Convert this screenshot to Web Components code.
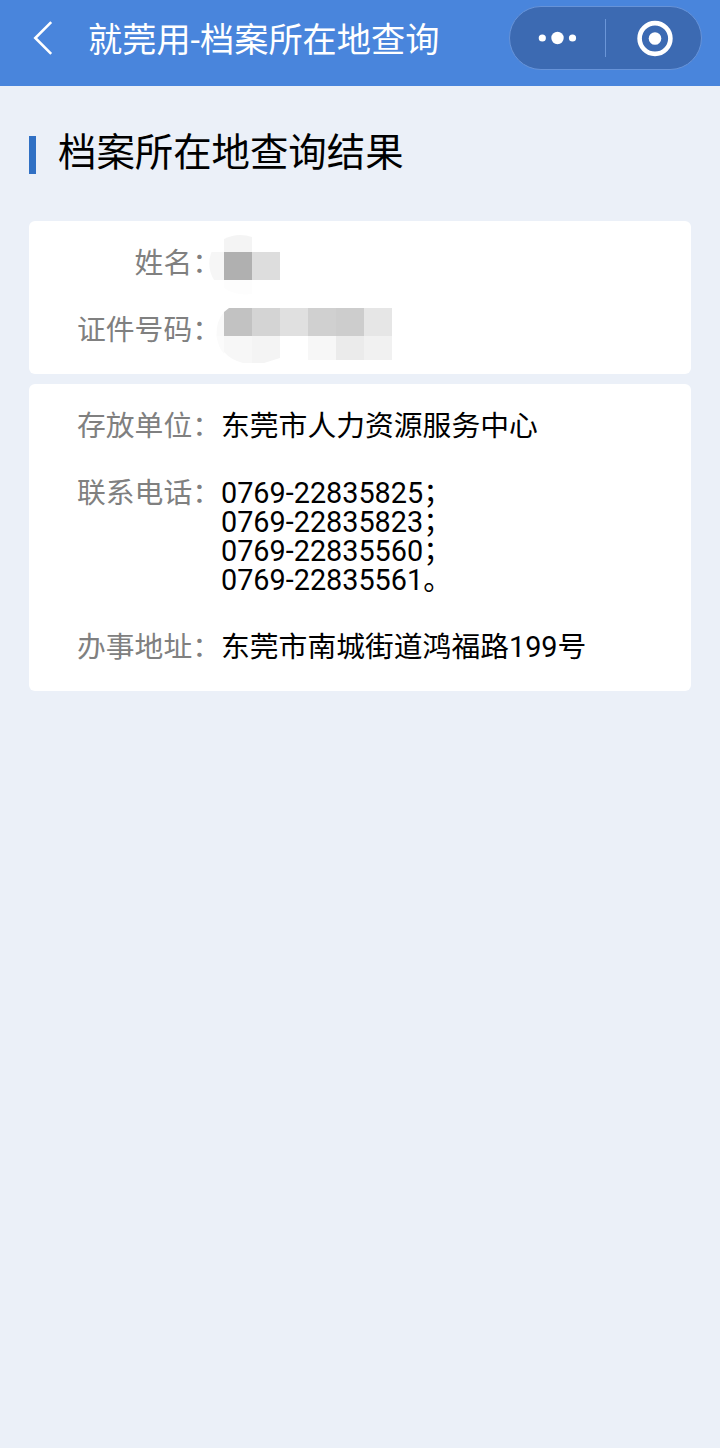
<!DOCTYPE html>
<html lang="zh-CN">
<head>
<meta charset="utf-8">
<meta name="viewport" content="width=device-width, initial-scale=1">
<title>就莞用-档案所在地查询</title>
<style>
    body {
        margin: 0;
        min-height: 100vh;
        background: #ebf0f8;
        color: #000;
        font-family: Roboto, "Noto Sans CJK SC", sans-serif;
        font-size: 28.8px;
        line-height: 29px;
    }
    main {
        display: flex;
        flex-direction: column;
        gap: 10px;
        padding: 0 29px;
    }
</style>
</head>
<body>
<nav-header>就莞用-档案所在地查询</nav-header>
<main>
    <section-title>档案所在地查询结果</section-title>
    <info-card>
        <info-row label="姓名："><masked-value kind="name"></masked-value></info-row>
        <info-row label="证件号码："><masked-value kind="id"></masked-value></info-row>
    </info-card>
    <info-card>
        <info-row label="存放单位：">东莞市人力资源服务中心</info-row>
        <info-row label="联系电话：">0769-22835825；<br>0769-22835823；<br>0769-22835560；<br>0769-22835561。</info-row>
        <info-row label="办事地址：">东莞市南城街道鸿福路199号</info-row>
    </info-card>
</main>

<script>
class NavHeader extends HTMLElement {
    constructor() {
        super();
        this.attachShadow({ mode: 'open' });
        this.shadowRoot.innerHTML = `
            <style>
                :host {
                    display: flex;
                    align-items: center;
                    box-sizing: border-box;
                    height: 86px;
                    padding: 0 18px 10px 32px;
                    background: #4985dc;
                    color: #fff;
                }
                .back {
                    flex: none;
                    width: 22px;
                    height: 36px;
                    margin-right: 34px;
                }
                h1 {
                    flex: 1;
                    margin: 0;
                    padding-top: 3px;
                    font-size: 34.2px;
                    font-weight: 400;
                    line-height: 40px;
                    white-space: nowrap;
                }
            </style>
            <svg class="back" viewBox="0 0 22 36" fill="none" stroke="#fff" stroke-width="2.6">
                <path d="M19.2 2.2 3.3 18l15.9 15.8"/>
            </svg>
            <h1><slot></slot></h1>
            <capsule-menu></capsule-menu>
        `;
    }
}

// The "more" and "close" buttons of the mini program
class CapsuleMenu extends HTMLElement {
    constructor() {
        super();
        this.attachShadow({ mode: 'open' });
        this.shadowRoot.innerHTML = `
            <style>
                :host {
                    display: flex;
                    align-items: center;
                    box-sizing: border-box;
                    width: 193px;
                    height: 64px;
                    border: 1px solid #6793d8;
                    border-radius: 32px;
                    background: #3c6ab2;
                }
                svg {
                    flex: 1;
                    height: 38px;
                }
                .line {
                    width: 1px;
                    height: 38px;
                    background: #6b96d8;
                }
            </style>
            <svg viewBox="0 0 95 38" fill="#fff">
                <circle cx="32.300" cy="19" r="3.6"/>
                <circle cx="47.5" cy="19" r="6.2"/>
                <circle cx="62.5" cy="19" r="3.6"/>
            </svg>
            <div class="line"></div>
            <svg viewBox="0 0 95 38" fill="#fff">
                <circle cx="49" cy="19.5" r="15.4" fill="none" stroke="#fff" stroke-width="4.6"/>
                <circle cx="49" cy="19.5" r="6.3"/>
            </svg>
        `;
    }
}

class SectionTitle extends HTMLElement {
    constructor() {
        super();
        this.attachShadow({ mode: 'open' });
        this.shadowRoot.innerHTML = `
            <style>
                :host {
                    display: flex;
                    align-items: flex-start;
                    box-sizing: border-box;
                    height: 125px;
                    padding-top: 48px;
                }
                .mark {
                    width: 7px;
                    height: 38px;
                    margin: 2px 22px 0 0;
                    background: #3070c4;
                }
                h2 {
                    margin: 0;
                    font-size: 38.4px;
                    font-weight: 400;
                    line-height: 38.4px;
                }
            </style>
            <div class="mark"></div>
            <h2><slot></slot></h2>
        `;
    }
}

class InfoCard extends HTMLElement {
    constructor() {
        super();
        this.attachShadow({ mode: 'open' });
        this.shadowRoot.innerHTML = `
            <style>
                :host {
                    display: block;
                    padding: 9px 48px 10px;
                    border-radius: 6px;
                    background: #fff;
                }
            </style>
            <slot></slot>
        `;
    }
}

class InfoRow extends HTMLElement {
    constructor() {
        super();
        this.attachShadow({ mode: 'open' });
        this.shadowRoot.innerHTML = `
            <style>
                :host {
                    display: flex;
                    padding: 19px 0;
                }
                .label {
                    flex: none;
                    width: 144px;
                    color: #808080;
                    text-align: right;
                    white-space: nowrap;
                }
                .value {
                    flex: 1;
                }
            </style>
            <div class="label"></div>
            <div class="value"><slot></slot></div>
        `;
        this.shadowRoot.querySelector('.label').textContent = this.getAttribute('label');
    }
}

// Mosaic tiles are 28px wide: [x, y, width, height, colour]
const MASKS = {
    name: {
        back: '<path d="M-9.500 2H3V30H-7Q-15 16-9.500 2z" fill="#f6f6f6"/><path d="M3-11Q17-18 31-13V2H3z" fill="#f4f4f4"/><path d="M3 30H31V44Q14 46 3 38z" fill="#fdfdfd"/>',
        tiles: [
            [3, 2, 28, 28, '#b0b0b0'],
            [31, 2, 28, 28, '#ddd'],
        ],
    },
    id: {
        back: '<path d="M3-5Q-5 4-4.500 19H3z" fill="#f9f9f9"/><path d="M-4.500 19H3V37Q-3 30-4.500 19z" fill="#fbfbfb"/><path d="M3 19H31V46H22Q10 43 3 35z" fill="#f7f7f7"/><path d="M31 19H59V41L43 46H31z" fill="#f4f4f4"/><path d="M8-9H31V19H3V-5z" fill="#c2c2c2"/>',
        tiles: [
            [31, -9, 28, 28, '#d4d4d4'],
            [59, -9, 28, 28, '#e0e0e0'],
            [87, -9, 28, 28, '#d0d0d0'],
            [115, -9, 28, 28, '#cdcdcd'],
            [143, -9, 28, 28, '#e6e6e6'],
            [87, 19, 28, 24, '#f7f7f7'],
            [115, 19, 28, 24, '#ebebeb'],
            [143, 19, 28, 24, '#f1f1f1'],
        ],
    },
};

class MaskedValue extends HTMLElement {
    constructor() {
        super();
        this.attachShadow({ mode: 'open' });
        const mask = MASKS[this.getAttribute('kind')];
        const tiles = mask.tiles.map(([x, y, w, h, fill]) =>
            `<rect x="${x}" y="${y}" width="${w}" height="${h}" fill="${fill}"/>`).join('');
        this.shadowRoot.innerHTML = `
            <style>
                :host {
                    display: block;
                    box-sizing: border-box;
                    height: 29px;
                    padding-top: 1px;
                }
                svg {
                    display: block;
                    overflow: visible;
                }
            </style>
            <svg width="172" height="28">${mask.back}${tiles}</svg>
        `;
    }
}

customElements.define('nav-header', NavHeader);
customElements.define('capsule-menu', CapsuleMenu);
customElements.define('section-title', SectionTitle);
customElements.define('info-card', InfoCard);
customElements.define('info-row', InfoRow);
customElements.define('masked-value', MaskedValue);
</script>
</body>
</html>
